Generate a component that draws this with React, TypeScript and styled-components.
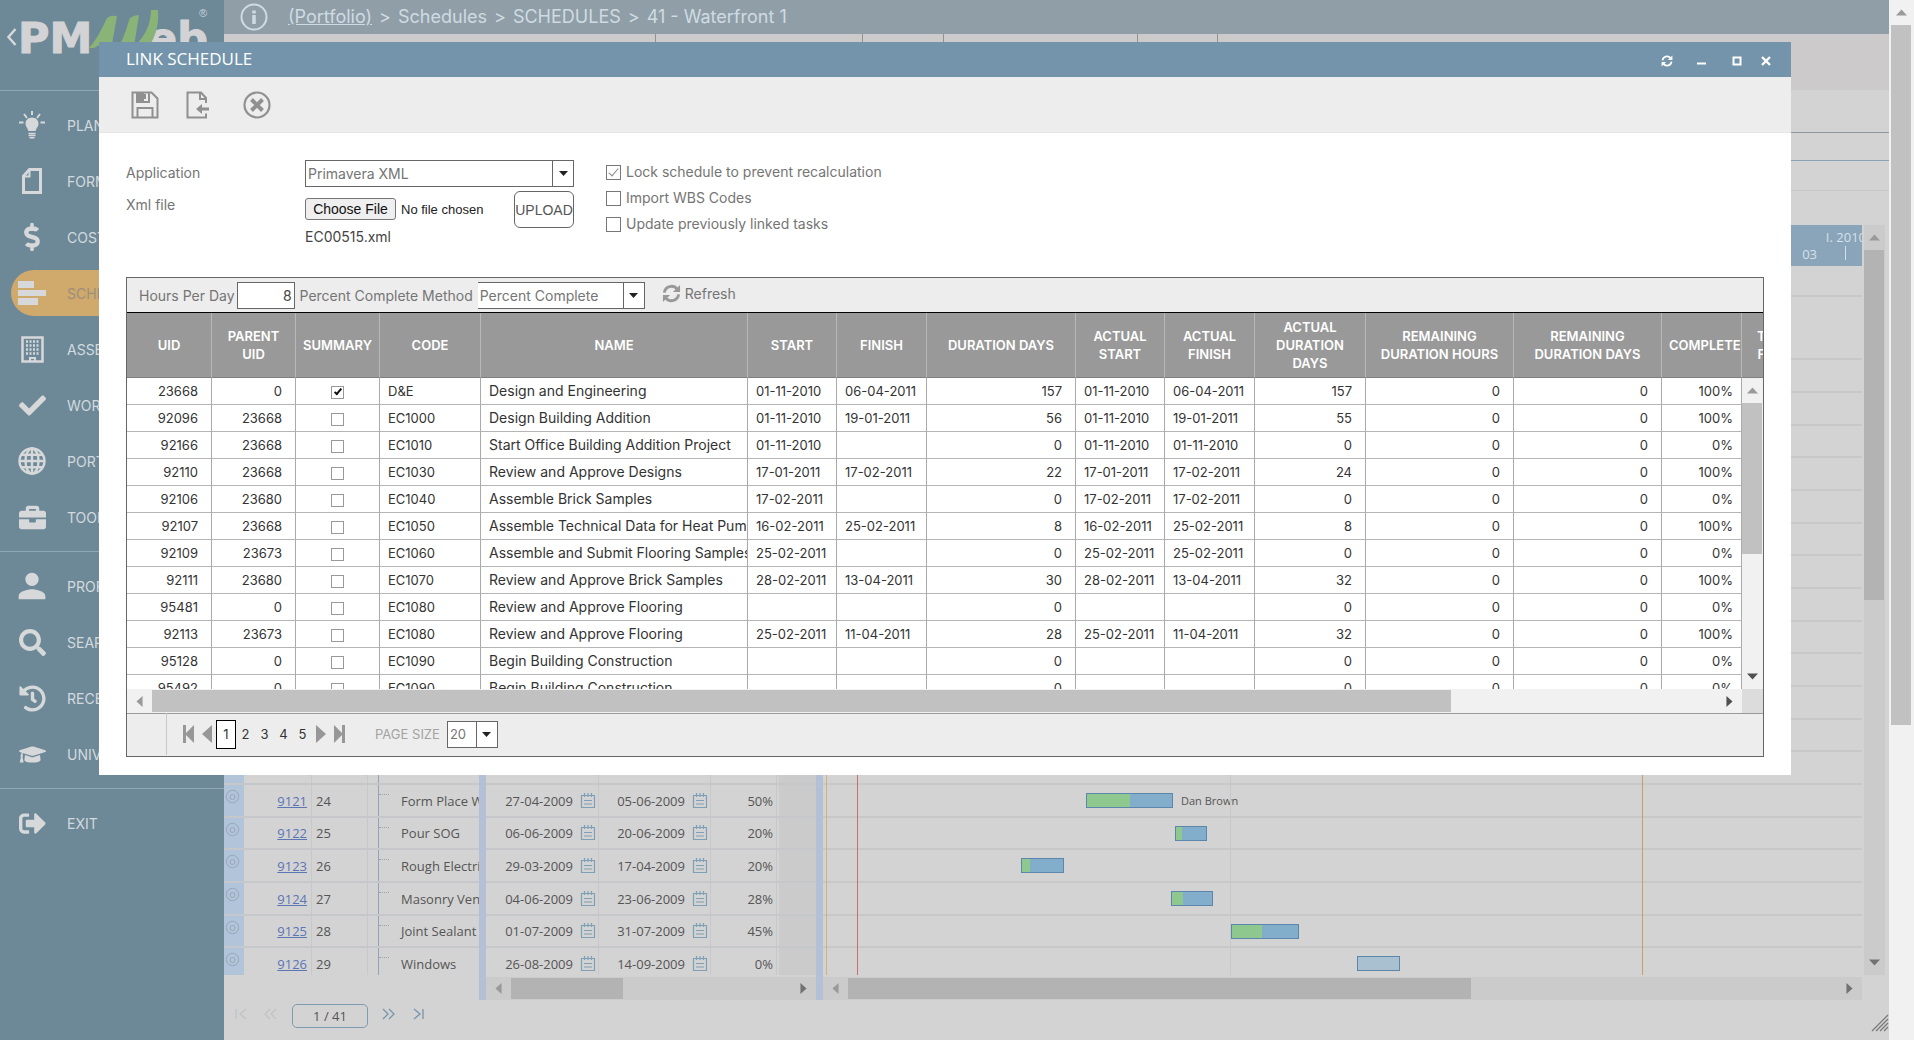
import React from "react";
import styled, { createGlobalStyle, css } from "styled-components";
import {
  FaDollarSign,
  FaCheck,
  FaBriefcase,
  FaSearch,
  FaHistory,
  FaGraduationCap,
  FaSignOutAlt,
} from "react-icons/fa";
import { MdPerson } from "react-icons/md";

const ui = `Inter, "Noto Sans", sans-serif`;
const humanist = `"Open Sans", "Noto Sans", sans-serif`;
const arial = `"Liberation Sans", Arial, sans-serif`;

const GlobalStyle = createGlobalStyle`
  *, *::before, *::after { box-sizing: border-box; }
  body { margin: 0; background: #d2d2d2; font-family: ${ui}; font-size: 14px; color: #333; overflow: hidden; }
  button, input, select { font: inherit; color: inherit; margin: 0; }
  button { padding: 0; border: 0; background: none; cursor: pointer; }
  svg { display: block; }
`;

const Page = styled.div`
  position: relative;
  display: flex;
  height: 100vh;
  overflow: hidden;
`;

/* ---------- sidebar ---------- */

const Sidebar = styled.nav`
  flex: none;
  width: 224px;
  background: #6d8998;
  overflow: hidden;
`;

const Brand = styled.div`
  height: 90px;
`;

const NavGroup = styled.ul`
  list-style: none;
  margin: 0;
  padding: 6px 0;
  border-top: 1px solid #8fa6b3;
`;

const NavItem = styled.li`
  height: 56px;
  padding: 5px 0 5px 11px;
`;

const NavLink = styled.a<{ $active?: boolean }>`
  display: flex;
  align-items: center;
  height: 46px;
  border-radius: 23px;
  gap: 14px;
  font-size: 14px;
  color: ${(p) => (p.$active ? "#9b8f7b" : "#d3dade")};
  background: ${(p) => (p.$active ? "#d0a96c" : "transparent")};
  text-decoration: none;
`;

const NavIcon = styled.span`
  display: flex;
  justify-content: center;
  width: 42px;
  color: #d6d8da;
`;

/* ---------- main area behind the window ---------- */

const Main = styled.main`
  flex: 1;
  min-width: 0;
  display: flex;
  flex-direction: column;
  background: #d3d3d3;
`;

const TopBar = styled.header`
  flex: none;
  display: flex;
  align-items: center;
  gap: 20px;
  height: 34px;
  padding-left: 16px;
  background: #909fa7;
  color: #cfdbe3;
  font-size: 18px;
  line-height: 24px;
  white-space: nowrap;
  a { color: inherit; }
`;

const Crumbs = styled.span`
  display: flex;
  gap: 7px;
`;

const TabStrip = styled.div`
  flex: none;
  display: grid;
  grid-template-columns: 431px 207px 81px 194px 80px 1fr;
  height: 56px;
  background: #cccacb;
  span + span { border-left: 1px solid #97928f; }
`;

const Band = styled.div<{ $h: number; $line: string }>`
  flex: none;
  height: ${(p) => p.$h}px;
  border-bottom: 1px solid ${(p) => p.$line};
`;

const Planner = styled.section`
  flex: 1;
  min-height: 0;
  display: flex;
  margin-top: 34px;
`;

const Pane = styled.div<{ $w?: number }>`
  display: flex;
  flex-direction: column;
  min-width: 0;
  ${(p) => (p.$w ? css`flex: none; width: ${p.$w}px;` : css`flex: 1;`)}
`;

const Splitter = styled.div`
  flex: none;
  width: 7px;
  background: #b4c0d5;
`;

const PaneHead = styled.div`
  flex: none;
  display: flex;
  flex-direction: column;
  align-items: flex-end;
  justify-content: center;
  height: 41px;
  background: #8aa5ba;
  color: #d6e0e8;
  font: 13px/17px ${humanist};
  overflow: hidden;
  white-space: nowrap;
`;

const MonthRow = styled.div`
  margin-right: -4px;
`;

const DayRow = styled.div`
  display: flex;
  gap: 28px;
  padding-right: 16px;
  i { width: 1px; height: 14px; background: #d6e0e8; }
`;

const PaneBody = styled.div`
  position: relative;
  flex: 1;
  min-height: 0;
  overflow: hidden;
  font: 13px/20px ${humanist};
  color: #555;
`;

const PaneFoot = styled.div`
  flex: none;
  height: 25px;
  padding-top: 2px;
`;

const lineHeights = css`
  height: 33px;
  &:nth-child(3n + 2) { height: 32px; }
  &:nth-child(1) { height: 31px; }
  &:nth-child(2) { height: 63px; }
`;

const TreeRow = styled.div`
  ${lineHeights}
  display: grid;
  grid-template-columns: 20px 68px 56px 11px 22px 1fr;
  align-items: center;
  border-bottom: 2px solid #c6c7ca;
  white-space: nowrap;
  overflow: hidden;
  > * { height: 100%; display: flex; align-items: center; }
`;

const RowMark = styled.span`
  justify-content: center;
  background: #b2c4d9;
  padding: 0 3px 8px 0;
  color: #98a7b9;
`;

const IdCell = styled.span`
  justify-content: flex-end;
  padding-right: 4px;
  border-right: 1px solid #c6c8cc;
  a { color: #5b75b5; }
`;

const SeqCell = styled.span`
  padding-left: 4px;
  border-right: 1px solid #c6c8cc;
`;

const TreeLine = styled.span`
  border-right: 1px solid #8ea6b8;
`;

const TreeDash = styled.span`
  &::before {
    content: "";
    width: 10px;
    border-top: 1px dotted #8ea6b8;
    margin-bottom: 12px;
  }
`;

const DateRow = styled.div`
  ${lineHeights}
  display: grid;
  grid-template-columns: 113px 112px 66px 1fr;
  border-bottom: 2px solid #c6c7ca;
`;

const DateCell = styled.span`
  display: flex;
  align-items: center;
  justify-content: flex-end;
  gap: 7px;
  padding-right: 2px;
  border-right: 1px solid #c6c8cc;
  color: #555;
  svg { color: #7f9fb6; }
`;

const PctCell = styled.span`
  display: flex;
  align-items: center;
  justify-content: flex-end;
  padding-right: 3px;
  border-right: 1px solid #c6c8cc;
`;

const ShadeCell = styled.span`
  background: #cbcbcb;
  margin-left: 2px;
`;

const ChartRow = styled.div`
  ${lineHeights}
  position: relative;
  border-bottom: 2px solid #c8c8c8;
`;

const ChartRule = styled.i<{ $color: string }>`
  position: absolute;
  top: 0;
  bottom: 0;
  width: 1px;
  background: ${(p) => p.$color};
`;

const TaskBar = styled.div<{ $empty: boolean }>`
  position: absolute;
  top: 8px;
  height: 15px;
  border: 1px solid #5c86ac;
  background: ${(p) => (p.$empty ? "#a8c0cf" : "#82aecb")};
`;

const TaskDone = styled.div`
  height: 100%;
  background: #8fc88f;
`;

const TaskOwner = styled.span`
  position: absolute;
  top: 6px;
  font-size: 11px;
  white-space: nowrap;
`;

const Footer = styled.footer`
  flex: none;
  display: flex;
  align-items: flex-start;
  gap: 12px;
  height: 40px;
  padding: 4px 0 0 8px;
  color: #7795ab;
  font-family: ${humanist};
`;

const StepButton = styled.button<{ $off?: boolean }>`
  width: 18px;
  height: 20px;
  color: ${(p) => (p.$off ? "#bfc3c6" : "#7795ab")};
`;

const RecordBox = styled.input`
  width: 76px;
  height: 24px;
  border: 1px solid #7f9bb0;
  border-radius: 5px;
  background: transparent;
  text-align: center;
  font-size: 13px;
  color: #555;
`;

const Grip = styled.div`
  margin: 10px 0 0 auto;
  color: #777;
`;

/* ---------- scroll bars ---------- */

const Bar = styled.div<{ $dir: "row" | "column"; $tone: "dim" | "light" }>`
  flex: none;
  display: flex;
  flex-direction: ${(p) => p.$dir};
  background: ${(p) => (p.$tone === "dim" ? "#cbcbcb" : "#f1f1f1")};
  color: ${(p) => (p.$tone === "dim" ? "#727272" : "#505050")};
  ${(p) => (p.$dir === "row" ? css`height: 23px; padding: 1px 0;` : css`width: 21px; padding: 0 1px 0 0;`)}
`;

const BarTrack = styled.div`
  flex: 1;
  display: flex;
  flex-direction: inherit;
`;

const BarThumb = styled.div<{ $tone: "dim" | "light" }>`
  background: ${(p) => (p.$tone === "dim" ? "#b3b3b3" : "#c1c1c1")};
`;

const BarEnd = styled.button<{ $muted?: boolean }>`
  display: flex;
  align-items: center;
  justify-content: center;
  width: 25px;
  height: 25px;
  ${Bar} > & { align-self: center; }
  color: ${(p) => (p.$muted ? "#9a9a9a" : "inherit")};
`;

const PageScroll = styled.div`
  flex: none;
  display: flex;
  width: 25px;
  padding-left: 2px;
  background: #f1f1f1;
`;

type Way = "up" | "down" | "left" | "right";
const turn: Record<Way, number> = { up: 0, right: 90, down: 180, left: 270 };

const Triangle = ({ way, size = 11 }: { way: Way; size?: number }) => (
  <svg width={size} height={size} viewBox="0 0 10 10" aria-hidden="true">
    <path d="M0 7.8 5 2.2 10 7.8z" fill="currentColor" transform={`rotate(${turn[way]} 5 5)`} />
  </svg>
);

interface ScrollProps {
  dir: "row" | "column";
  tone: "dim" | "light";
  share: number;
  end?: boolean;
}

const ScrollBar = ({ dir, tone, share, end = true }: ScrollProps) => {
  const size = dir === "row" ? { width: `${share}%` } : { height: `${share}%` };
  return (
    <Bar $dir={dir} $tone={tone}>
      <BarEnd type="button" $muted aria-label={dir === "row" ? "Scroll left" : "Scroll up"}>
        <Triangle way={dir === "row" ? "left" : "up"} />
      </BarEnd>
      <BarTrack>
        <BarThumb $tone={tone} style={size} />
      </BarTrack>
      {end && (
        <BarEnd type="button" aria-label={dir === "row" ? "Scroll right" : "Scroll down"}>
          <Triangle way={dir === "row" ? "right" : "down"} />
        </BarEnd>
      )}
    </Bar>
  );
};

const PaneScroll = styled.div`
  display: flex;
  height: 100%;
  padding: 0 0 25px 2px;
`;

/* ---------- link schedule window ---------- */

const Dialog = styled.div`
  position: absolute;
  top: 42px;
  left: 99px;
  right: 123px;
  background: #fff;
`;

const TitleBar = styled.div`
  display: flex;
  align-items: center;
  justify-content: space-between;
  height: 35px;
  padding: 0 19px 0 27px;
  background: #7394aa;
  color: #fff;
`;

const Title = styled.h1`
  margin: 0;
  padding-bottom: 2px;
  font: 400 17px/24px ${humanist};
`;

const WindowButtons = styled.div`
  display: flex;
  gap: 23px;
  padding-top: 3px;
  button:last-child { margin-left: -6px; }
`;

const CommandBar = styled.div`
  display: flex;
  align-items: center;
  gap: 27px;
  height: 56px;
  padding: 0 32px;
  background: #ededed;
  border-bottom: 1px solid #e6e6e6;
  color: #909090;
  button:last-child { margin-left: 6px; }
`;

const DialogBody = styled.div`
  padding: 27px 27px 18px;
`;

const Form = styled.form`
  display: grid;
  grid-template-columns: 179px 269px auto;
  justify-content: start;
  height: 117px;
  color: #757575;
`;

const Labels = styled.div`
  display: flex;
  flex-direction: column;
  gap: 12px;
  padding-top: 3px;
  line-height: 20px;
`;

const Controls = styled.div`
  display: flex;
  flex-direction: column;
`;

const FileLine = styled.div`
  display: flex;
  justify-content: space-between;
  margin-top: 4px;
`;

const FileInput = styled.input`
  width: 200px;
  padding-top: 7px;
  font: 13px/20px ${arial};
  color: #222;
  &::file-selector-button {
    width: 91px;
    height: 22px;
    margin: 0 5px 0 0;
    padding: 0;
    border: 1px solid #767676;
    border-radius: 3px;
    background: #efefef;
    color: #111;
    font: 14px/18px ${arial};
  }
`;

const Upload = styled.button`
  width: 60px;
  height: 37px;
  border: 1px solid #666;
  border-radius: 6px;
  font: 14px/20px ${arial};
  color: #555;
`;

const FileName = styled.div`
  line-height: 18px;
  color: #444;
`;

const Options = styled.div`
  display: flex;
  flex-direction: column;
  gap: 6px;
  padding: 2px 0 0 32px;
`;

const Option = styled.label`
  display: flex;
  align-items: center;
  gap: 5px;
  line-height: 20px;
`;

const Tick = styled.input<{ $small?: boolean }>`
  appearance: none;
  display: inline-block;
  vertical-align: middle;
  width: ${(p) => (p.$small ? 13 : 15)}px;
  height: ${(p) => (p.$small ? 13 : 15)}px;
  border: 1px solid ${(p) => (p.$small ? "#999" : "#777")};
  background: #fff;
  &:checked::before {
    content: "";
    display: block;
    width: ${(p) => (p.$small ? 4 : 5)}px;
    height: ${(p) => (p.$small ? 8 : 10)}px;
    margin: 0 auto;
    border: solid ${(p) => (p.$small ? "#111" : "#888")};
    border-width: ${(p) => (p.$small ? "0 2px 2px 0" : "0 1px 1px 0")};
    transform: rotate(40deg);
  }
`;

const SelectBox = styled.span<{ $w: number; $open?: boolean }>`
  display: grid;
  grid-template-columns: 1fr 21px;
  width: ${(p) => p.$w}px;
  height: 27px;
  border: 1px solid #666;
  border-left-width: ${(p) => (p.$open ? 0 : 1)}px;
  background: #fff;
  color: #757575;
  select {
    grid-area: 1 / 1 / 2 / 3;
    appearance: none;
    width: 100%;
    padding: 0 22px 0 2px;
    border: 0;
    background: transparent;
    outline: none;
  }
  i {
    grid-area: 1 / 2 / 2 / 3;
    display: flex;
    align-items: center;
    justify-content: center;
    border-left: 1px solid #666;
    color: #222;
    pointer-events: none;
  }
`;

interface DropProps {
  id: string;
  width: number;
  value: string;
  open?: boolean;
}

const Drop = ({ id, width, value, open }: DropProps) => (
  <SelectBox $w={width} $open={open}>
    <select id={id} defaultValue={value}>
      <option>{value}</option>
    </select>
    <i>
      <Triangle way="down" size={9} />
    </i>
  </SelectBox>
);

const Grid = styled.section`
  border: 1px solid #666;
  background: #ededed;
`;

const GridTools = styled.div`
  display: flex;
  align-items: center;
  height: 35px;
  padding: 0 12px;
  border-bottom: 1px solid #000;
  color: #757575;
`;

const HoursInput = styled.input`
  width: 58px;
  height: 27px;
  margin: 0 5px 0 2px;
  padding: 0 2px;
  border: 1px solid #666;
  background: #fff;
  text-align: right;
  color: #444;
`;

const MethodLabel = styled.label`
  margin-right: 5px;
`;

const RefreshButton = styled.button`
  display: flex;
  align-items: center;
  gap: 4px;
  margin-left: 17px;
  padding-bottom: 3px;
  font-size: 14px;
  color: #757575;
  svg { color: #999; }
`;

const HeadClip = styled.div`
  overflow: hidden;
  background: #999;
`;

const Table = styled.table`
  width: 1688px;
  border-collapse: separate;
  border-spacing: 0;
  table-layout: fixed;
`;

const HeadCell = styled.th`
  height: 65px;
  padding: 0 7px;
  border-right: 1px solid #b8b8b8;
  border-bottom: 1px solid #808080;
  color: #fff;
  font-size: 13px;
  font-weight: 600;
  line-height: 18px;
`;

const Cell = styled.td<{ $align?: string; $large?: boolean; $tight?: boolean }>`
  height: 27px;
  padding: ${(p) => (p.$align === "center" ? "0" : p.$tight ? "0 8px" : "0 13px 0 8px")};
  border-right: 1px solid #aaa;
  border-bottom: 1px solid #b5b5b5;
  background: #fff;
  text-align: ${(p) => p.$align ?? "right"};
  font-size: ${(p) => (p.$large ? 14 : 13)}px;
  line-height: 18px;
  color: #333;
  white-space: nowrap;
  overflow: hidden;
  ${(p) => p.$align === "left" && css`padding-right: 0;`}
`;

const BodyRow = styled.div`
  display: flex;
  height: 311px;
`;

const BodyClip = styled.div`
  flex: 1;
  min-width: 0;
  overflow: hidden;
`;

const BottomScroll = styled.div`
  display: flex;
  border-bottom: 1px solid #999;
  > :first-child { flex: 1; height: 24px; }
`;

const ScrollCorner = styled.span`
  width: 21px;
  background: #dcdcdc;
`;

const Pager = styled.div`
  display: flex;
  align-items: center;
  height: 42px;
  padding-bottom: 2px;
  font-size: 13px;
`;

const PagerLead = styled.span`
  width: 40px;
  height: 42px;
  margin-right: 13px;
  border-right: 1px solid #c8c8c8;
`;

const PageButton = styled.button<{ $current?: boolean }>`
  width: ${(p) => (p.$current ? 20 : 19)}px;
  height: 29px;
  border: ${(p) => (p.$current ? "1px solid #000" : "0")};
  background: ${(p) => (p.$current ? "#fff" : "transparent")};
`;

const ArrowButton = styled.button`
  display: flex;
  align-items: center;
  justify-content: center;
  width: 18px;
  height: 20px;
  color: #979797;
`;

const PageSize = styled.label`
  display: flex;
  align-items: center;
  gap: 7px;
  margin-left: 27px;
  color: #a3a3a3;
`;

/* ---------- icons ---------- */

const Bulb = () => (
  <svg width="26" height="28" viewBox="0 0 26 28" fill="none" stroke="currentColor" strokeWidth="2">
    <path d="M13 0v4M5 3l3 4M21 3l-3 4M0 11.500h4.500M21.500 11.500H26" />
    <path
      d="M13 6.500c4 0 6.500 2.800 6.500 6.200 0 3-2.300 4.200-2.800 7.300H9.300c-.5-3.100-2.800-4.300-2.800-7.300 0-3.400 2.500-6.200 6.500-6.200z"
      fill="currentColor"
      stroke="none"
    />
    <path d="M9.500 22.500h7M9.500 24.500h7M10.500 26.800h5" strokeWidth="1.500" />
  </svg>
);

const Folio = () => (
  <svg width="20" height="26" viewBox="0 0 20 26" fill="none" stroke="currentColor" strokeWidth="3">
    <path d="M7.500 1.500h11v23h-17V8z" />
    <path d="M1.500 8.500h6v-7" strokeWidth="2" />
  </svg>
);

const Bars = () => (
  <svg width="28" height="24" viewBox="0 0 28 24" fill="currentColor">
    <path d="M0 0h16v7H0zM0 9h28v6H0zM0 17h20v7H0z" />
  </svg>
);

const Tower = () => (
  <svg width="23" height="27" viewBox="0 0 23 27" fill="none" stroke="currentColor">
    <path d="M1.500 1.500h20v24h-20z" strokeWidth="2.500" />
    <path d="M5 5.500h14M5 9.500h14M5 13.500h14M5 17.500h14" strokeWidth="2.500" strokeDasharray="2 1.500" />
    <path d="M9 26v-4h5v4" strokeWidth="2" />
  </svg>
);

const Globe = () => (
  <svg width="28" height="28" viewBox="0 0 28 28" fill="none" stroke="currentColor" strokeWidth="2.400">
    <circle cx="14" cy="14" r="12.500" />
    <ellipse cx="14" cy="14" rx="6.500" ry="12.500" />
    <path d="M14 1.500v25M1.500 14h25M3.500 7.800h21M3.500 20.200h21" />
  </svg>
);

const Calendar = () => (
  <svg width="16" height="16" viewBox="0 0 16 16" fill="none" stroke="currentColor" strokeWidth="1.200">
    <path d="M1.500 2.500h13v12h-13zM4.500 0v4M8 0v4M11.500 0v4M4 7.500h8M4 11h8" />
  </svg>
);

const RowDot = () => (
  <svg width="15" height="15" viewBox="0 0 15 15" fill="none" stroke="currentColor">
    <circle cx="7.500" cy="7.500" r="6.200" />
    <circle cx="7.500" cy="8" r="2.500" />
  </svg>
);

const InfoIcon = () => (
  <svg width="28" height="28" viewBox="0 0 28 28" fill="none" stroke="currentColor" strokeWidth="2">
    <circle cx="14" cy="14" r="12.500" />
    <path d="M14 12v9M14 7.500v3" strokeWidth="3.500" />
  </svg>
);

const SaveIcon = () => (
  <svg width="28" height="28" viewBox="0 0 28 28" fill="none" stroke="currentColor" strokeWidth="2">
    <path d="M1.500 1.500h19l6 6v19h-25z" />
    <path d="M6.500 26V17h15v9M6 2v9h12V2" />
    <path d="M6 2h6v9H6z" fill="currentColor" />
    <path d="M14 3v5" />
  </svg>
);

const ImportIcon = () => (
  <svg width="24" height="28" viewBox="0 0 24 28" fill="none" stroke="currentColor" strokeWidth="2">
    <path d="M20 12V7l-5-5.500H1.500v25H20v-4" />
    <path d="M14 1.500V8h6" />
    <path d="M10 18l6-5v3.500h7v3h-7V23z" fill="currentColor" stroke="none" />
  </svg>
);

const CancelIcon = () => (
  <svg width="28" height="28" viewBox="0 0 28 28" fill="none" stroke="currentColor" strokeWidth="2.200">
    <circle cx="14" cy="14" r="12.500" />
    <path d="M8.500 8.500l11 11M19.500 8.500l-11 11" strokeWidth="4" />
  </svg>
);

const CycleIcon = ({ size = 20 }: { size?: number }) => (
  <svg width={size} height={size} viewBox="0 0 20 20" fill="none" stroke="currentColor" strokeWidth="3">
    <path d="M2.500 9a7.500 7.500 0 0 1 13.300-3.800M17.500 11a7.500 7.500 0 0 1-13.300 3.800" />
    <path d="M19 1v7.500h-7.500zM1 19v-7.500h7.500z" fill="currentColor" stroke="none" />
  </svg>
);

const Chevrons = ({ d }: { d: string }) => (
  <svg width="18" height="18" viewBox="0 0 18 18" fill="none" stroke="currentColor" strokeWidth="1.300">
    <path d={d} />
  </svg>
);

const EdgeArrow = ({ flip }: { flip?: boolean }) => (
  <svg width="12" height="18" viewBox="0 0 12 18" fill="currentColor">
    <path d="M0 0h3v8l8-8v18L3 10v8H0z" transform={flip ? "translate(12 0) scale(-1 1)" : undefined} />
  </svg>
);

const SideArrow = ({ flip }: { flip?: boolean }) => (
  <svg width="10" height="18" viewBox="0 0 10 18" fill="currentColor">
    <path d={flip ? "M0 0l10 9-10 9z" : "M10 0L0 9l10 9z"} />
  </svg>
);

const Logo = () => (
  <svg width="224" height="80" viewBox="0 0 224 80" role="img" aria-label="PMWeb">
    <path d="M15.500 29l-7 8 7 8" fill="none" stroke="#d6d8da" strokeWidth="2.500" />
    <g
      fill="#d3d3d6"
      stroke="#d3d3d6"
      strokeWidth="1"
      fontFamily="DejaVu Sans"
      fontWeight="700"
      fontSize="43"
    >
      <text x="18" y="53">PM</text>
      <text x="148" y="53">eb</text>
    </g>
    <g fill="#8ab477">
      <path d="M89 48C98 38 103 26 107 18q4-3 10-2L112 44H101L94 48z" />
      <path d="M119 46C125 36 127 26 130 18q4-3 9-3L134 46z" />
      <path d="M135 46C146 35 151 23 151 10h7C159 24 156 36 149 46z" />
    </g>
    <text x="199" y="17" fontSize="11" fontFamily="Liberation Sans" fill="#c9d2d8">®</text>
  </svg>
);

/* ---------- data ---------- */

const navGroups: { label: string; icon: React.ReactNode; active?: boolean }[][] = [
  [
    { label: "PLANS", icon: <Bulb /> },
    { label: "FORMS", icon: <Folio /> },
    { label: "COSTS", icon: <FaDollarSign size={28} /> },
    { label: "SCHEDULES", icon: <Bars />, active: true },
    { label: "ASSETS", icon: <Tower /> },
    { label: "WORKFLOW", icon: <FaCheck size={27} /> },
    { label: "PORTFOLIO", icon: <Globe /> },
    { label: "TOOLS", icon: <FaBriefcase size={27} /> },
  ],
  [
    { label: "PROFILE", icon: <MdPerson size={40} /> },
    { label: "SEARCH", icon: <FaSearch size={27} /> },
    { label: "RECENT", icon: <FaHistory size={27} /> },
    { label: "UNIVERSITY", icon: <FaGraduationCap size={27} /> },
  ],
  [{ label: "EXIT", icon: <FaSignOutAlt size={27} /> }],
];

interface Task {
  id: string;
  seq: number;
  name: string;
  start: string;
  finish: string;
  pct: number;
  from: number;
  width: number;
  owner?: string;
}

const tasks: Task[] = [
  { id: "9120", seq: 23, name: "", start: "", finish: "", pct: 0, from: 0, width: 0 },
  { id: "9121", seq: 24, name: "Form Place W", start: "27-04-2009", finish: "05-06-2009", pct: 50, from: 263, width: 87, owner: "Dan Brown" },
  { id: "9122", seq: 25, name: "Pour SOG", start: "06-06-2009", finish: "20-06-2009", pct: 20, from: 352, width: 32 },
  { id: "9123", seq: 26, name: "Rough Electri", start: "29-03-2009", finish: "17-04-2009", pct: 20, from: 198, width: 43 },
  { id: "9124", seq: 27, name: "Masonry Ven", start: "04-06-2009", finish: "23-06-2009", pct: 28, from: 348, width: 42 },
  { id: "9125", seq: 28, name: "Joint Sealant", start: "01-07-2009", finish: "31-07-2009", pct: 45, from: 408, width: 68 },
  { id: "9126", seq: 29, name: "Windows", start: "26-08-2009", finish: "14-09-2009", pct: 0, from: 534, width: 43 },
];

const planRows: (Task | null)[] = [...Array(14).fill(null), ...tasks];

interface Column {
  title: string;
  width: number;
  align?: string;
  large?: boolean;
  tight?: boolean;
}

const columns: Column[] = [
  { title: "UID", width: 85 },
  { title: "PARENT UID", width: 84 },
  { title: "SUMMARY", width: 84, align: "center" },
  { title: "CODE", width: 101, align: "left" },
  { title: "NAME", width: 267, align: "left", large: true },
  { title: "START", width: 89, align: "left" },
  { title: "FINISH", width: 90, align: "left" },
  { title: "DURATION DAYS", width: 149 },
  { title: "ACTUAL START", width: 89, align: "left" },
  { title: "ACTUAL FINISH", width: 90, align: "left" },
  { title: "ACTUAL DURATION DAYS", width: 111 },
  { title: "REMAINING DURATION HOURS", width: 148 },
  { title: "REMAINING DURATION DAYS", width: 148 },
  { title: "COMPLETE", width: 80, tight: true },
  { title: "TOTAL FLOAT", width: 73 },
];

const records: string[][] = [
  ["23668", "0", "y", "D&E", "Design and Engineering", "01-11-2010", "06-04-2011", "157", "01-11-2010", "06-04-2011", "157", "0", "0", "100%"],
  ["92096", "23668", "", "EC1000", "Design Building Addition", "01-11-2010", "19-01-2011", "56", "01-11-2010", "19-01-2011", "55", "0", "0", "100%"],
  ["92166", "23668", "", "EC1010", "Start Office Building Addition Project", "01-11-2010", "", "0", "01-11-2010", "01-11-2010", "0", "0", "0", "0%"],
  ["92110", "23668", "", "EC1030", "Review and Approve Designs", "17-01-2011", "17-02-2011", "22", "17-01-2011", "17-02-2011", "24", "0", "0", "100%"],
  ["92106", "23680", "", "EC1040", "Assemble Brick Samples", "17-02-2011", "", "0", "17-02-2011", "17-02-2011", "0", "0", "0", "0%"],
  ["92107", "23668", "", "EC1050", "Assemble Technical Data for Heat Pump", "16-02-2011", "25-02-2011", "8", "16-02-2011", "25-02-2011", "8", "0", "0", "100%"],
  ["92109", "23673", "", "EC1060", "Assemble and Submit Flooring Samples", "25-02-2011", "", "0", "25-02-2011", "25-02-2011", "0", "0", "0", "0%"],
  ["92111", "23680", "", "EC1070", "Review and Approve Brick Samples", "28-02-2011", "13-04-2011", "30", "28-02-2011", "13-04-2011", "32", "0", "0", "100%"],
  ["95481", "0", "", "EC1080", "Review and Approve Flooring", "", "", "0", "", "", "0", "0", "0", "0%"],
  ["92113", "23673", "", "EC1080", "Review and Approve Flooring", "25-02-2011", "11-04-2011", "28", "25-02-2011", "11-04-2011", "32", "0", "0", "100%"],
  ["95128", "0", "", "EC1090", "Begin Building Construction", "", "", "0", "", "", "0", "0", "0", "0%"],
  ["95492", "0", "", "EC1090", "Begin Building Construction", "", "", "0", "", "", "0", "0", "0", "0%"],
];

const Cols = () => (
  <colgroup>
    {columns.map((c) => (
      <col key={c.title} style={{ width: c.width }} />
    ))}
  </colgroup>
);

/* ---------- sections ---------- */

const Background = () => (
  <Main>
    <TopBar>
      <InfoIcon />
      <Crumbs>
        <a href="#portfolio">(Portfolio)</a>
        <span>&gt;</span>
        <span>Schedules</span>
        <span>&gt;</span>
        <span>SCHEDULES</span>
        <span>&gt;</span>
        <span>41 - Waterfront 1</span>
      </Crumbs>
    </TopBar>
    <TabStrip>
      {[0, 1, 2, 3, 4, 5].map((n) => (
        <span key={n} />
      ))}
    </TabStrip>
    <Band $h={43} $line="#8f989d" />
    <Band $h={28} $line="#86a2b5" />
    <Band $h={30} $line="#c8c8c8" />
    <Planner>
      <Pane $w={255}>
        <PaneHead />
        <PaneBody>
          {planRows.map((t, i) => (
            <TreeRow key={i}>
              <RowMark>{t && <RowDot />}</RowMark>
              <IdCell>{t && <a href={`#${t.id}`}>{t.id}</a>}</IdCell>
              <SeqCell>{t?.seq}</SeqCell>
              <TreeLine />
              <TreeDash />
              <span>{t?.name}</span>
            </TreeRow>
          ))}
        </PaneBody>
        <PaneFoot />
      </Pane>
      <Splitter />
      <Pane $w={330}>
        <PaneHead />
        <PaneBody>
          {planRows.map((t, i) => (
            <DateRow key={i}>
              <DateCell>{t?.start}{t && <Calendar />}</DateCell>
              <DateCell>{t?.finish}{t && <Calendar />}</DateCell>
              <PctCell>{t && t.start && `${t.pct}%`}</PctCell>
              <ShadeCell />
            </DateRow>
          ))}
        </PaneBody>
        <PaneFoot>
          <ScrollBar dir="row" tone="dim" share={40} />
        </PaneFoot>
      </Pane>
      <Splitter />
      <Pane>
        <PaneHead>
          <MonthRow>I. 2010</MonthRow>
          <DayRow>
            03 <i />
          </DayRow>
        </PaneHead>
        <PaneBody>
          {planRows.map((t, i) => (
            <ChartRow key={i}>
              {t && t.width > 0 && (
                <>
                  <TaskBar $empty={t.pct === 0} style={{ left: t.from, width: t.width }}>
                    <TaskDone style={{ width: `${t.pct}%` }} />
                  </TaskBar>
                  {t.owner && <TaskOwner style={{ left: t.from + t.width + 8 }}>{t.owner}</TaskOwner>}
                </>
              )}
            </ChartRow>
          ))}
          <ChartRule $color="#d2b27c" style={{ left: 3 }} />
          <ChartRule $color="#c9706c" style={{ left: 34 }} />
          <ChartRule $color="#c8c8c8" style={{ left: 407 }} />
          <ChartRule $color="#c6a06a" style={{ left: 819 }} />
        </PaneBody>
        <PaneFoot>
          <ScrollBar dir="row" tone="dim" share={63} />
        </PaneFoot>
      </Pane>
      <Pane $w={27}>
        <PaneScroll>
          <ScrollBar dir="column" tone="dim" share={50} />
        </PaneScroll>
      </Pane>
    </Planner>
    <Footer>
      <StepButton $off type="button" aria-label="First record">
        <Chevrons d="M4 4v10M14 4l-6 5 6 5" />
      </StepButton>
      <StepButton $off type="button" aria-label="Previous record">
        <Chevrons d="M8 4L3 9l5 5M14 4L9 9l5 5" />
      </StepButton>
      <RecordBox aria-label="Record" defaultValue="1 / 41" />
      <StepButton type="button" aria-label="Next record">
        <Chevrons d="M3 4l5 5-5 5M9 4l5 5-5 5" />
      </StepButton>
      <StepButton type="button" aria-label="Last record">
        <Chevrons d="M4 4l6 5-6 5M13 4v10" />
      </StepButton>
      <Grip>
        <svg width="18" height="18" viewBox="0 0 18 18" stroke="currentColor" strokeWidth="1.200">
          <path d="M1 17L17 1M5 17L17 5M9 17l8-8M13 17l4-4" />
        </svg>
      </Grip>
    </Footer>
  </Main>
);

const LinkWindow = () => (
  <Dialog role="dialog" aria-label="Link schedule">
    <TitleBar>
      <Title>LINK SCHEDULE</Title>
      <WindowButtons>
        <button type="button" aria-label="Reload">
          <CycleIcon size={12} />
        </button>
        <button type="button" aria-label="Minimize">
          <svg width="12" height="12" viewBox="0 0 12 12"><path d="M1 8.500h9" stroke="currentColor" strokeWidth="2" /></svg>
        </button>
        <button type="button" aria-label="Maximize">
          <svg width="12" height="12" viewBox="0 0 12 12"><path d="M2.500 2.500h7v7h-7z" fill="none" stroke="currentColor" strokeWidth="2" /></svg>
        </button>
        <button type="button" aria-label="Close">
          <svg width="12" height="12" viewBox="0 0 12 12"><path d="M2 2l8 8M10 2l-8 8" stroke="currentColor" strokeWidth="2.400" /></svg>
        </button>
      </WindowButtons>
    </TitleBar>
    <CommandBar>
      <button type="button" aria-label="Save"><SaveIcon /></button>
      <button type="button" aria-label="Import"><ImportIcon /></button>
      <button type="button" aria-label="Cancel"><CancelIcon /></button>
    </CommandBar>
    <DialogBody>
      <Form onSubmit={(e) => e.preventDefault()}>
        <Labels>
          <label htmlFor="application">Application</label>
          <label htmlFor="xmlfile">Xml file</label>
        </Labels>
        <Controls>
          <Drop id="application" width={269} value="Primavera XML" />
          <FileLine>
            <FileInput id="xmlfile" type="file" />
            <Upload type="button">UPLOAD</Upload>
          </FileLine>
          <FileName>EC00515.xml</FileName>
        </Controls>
        <Options>
          <Option><Tick type="checkbox" defaultChecked />Lock schedule to prevent recalculation</Option>
          <Option><Tick type="checkbox" />Import WBS Codes</Option>
          <Option><Tick type="checkbox" />Update previously linked tasks</Option>
        </Options>
      </Form>
      <Grid>
        <GridTools>
          <label htmlFor="hours">Hours Per Day</label>
          <HoursInput id="hours" defaultValue="8" />
          <MethodLabel htmlFor="method">Percent Complete Method</MethodLabel>
          <Drop id="method" width={167} value="Percent Complete" open />
          <RefreshButton type="button"><CycleIcon size={19} />Refresh</RefreshButton>
        </GridTools>
        <HeadClip>
          <Table>
            <Cols />
            <thead>
              <tr>
                {columns.map((c) => (
                  <HeadCell key={c.title} scope="col">{c.title}</HeadCell>
                ))}
              </tr>
            </thead>
          </Table>
        </HeadClip>
        <BodyRow>
          <BodyClip>
            <Table>
              <Cols />
              <tbody>
                {records.map((r) => (
                  <tr key={r[0]}>
                    {columns.map((c, i) => (
                      <Cell key={c.title} $align={c.align} $large={c.large} $tight={c.tight}>
                        {i === 2 ? (
                          <Tick $small type="checkbox" defaultChecked={r[2] === "y"} aria-label={`Summary ${r[0]}`} />
                        ) : (
                          r[i]
                        )}
                      </Cell>
                    ))}
                  </tr>
                ))}
              </tbody>
            </Table>
          </BodyClip>
          <ScrollBar dir="column" tone="light" share={58} />
        </BodyRow>
        <BottomScroll>
          <ScrollBar dir="row" tone="light" share={83} />
          <ScrollCorner />
        </BottomScroll>
        <Pager>
          <PagerLead />
          <ArrowButton type="button" aria-label="First page"><EdgeArrow /></ArrowButton>
          <ArrowButton type="button" aria-label="Previous page"><SideArrow /></ArrowButton>
          {[1, 2, 3, 4, 5].map((n) => (
            <PageButton key={n} type="button" $current={n === 1}>{n}</PageButton>
          ))}
          <ArrowButton type="button" aria-label="Next page"><SideArrow flip /></ArrowButton>
          <ArrowButton type="button" aria-label="Last page"><EdgeArrow flip /></ArrowButton>
          <PageSize htmlFor="pagesize">
            PAGE SIZE
            <Drop id="pagesize" width={51} value="20" />
          </PageSize>
        </Pager>
      </Grid>
    </DialogBody>
  </Dialog>
);

export default function App() {
  return (
    <>
      <GlobalStyle />
      <Page>
        <Sidebar>
          <Brand>
            <Logo />
          </Brand>
          {navGroups.map((group, g) => (
            <NavGroup key={g}>
              {group.map((item) => (
                <NavItem key={item.label}>
                  <NavLink href={`#${item.label.toLowerCase()}`} $active={item.active}>
                    <NavIcon>{item.icon}</NavIcon>
                    {item.label}
                  </NavLink>
                </NavItem>
              ))}
            </NavGroup>
          ))}
        </Sidebar>
        <Background />
        <PageScroll>
          <ScrollBar dir="column" tone="light" share={69} end={false} />
        </PageScroll>
        <LinkWindow />
      </Page>
    </>
  );
}
